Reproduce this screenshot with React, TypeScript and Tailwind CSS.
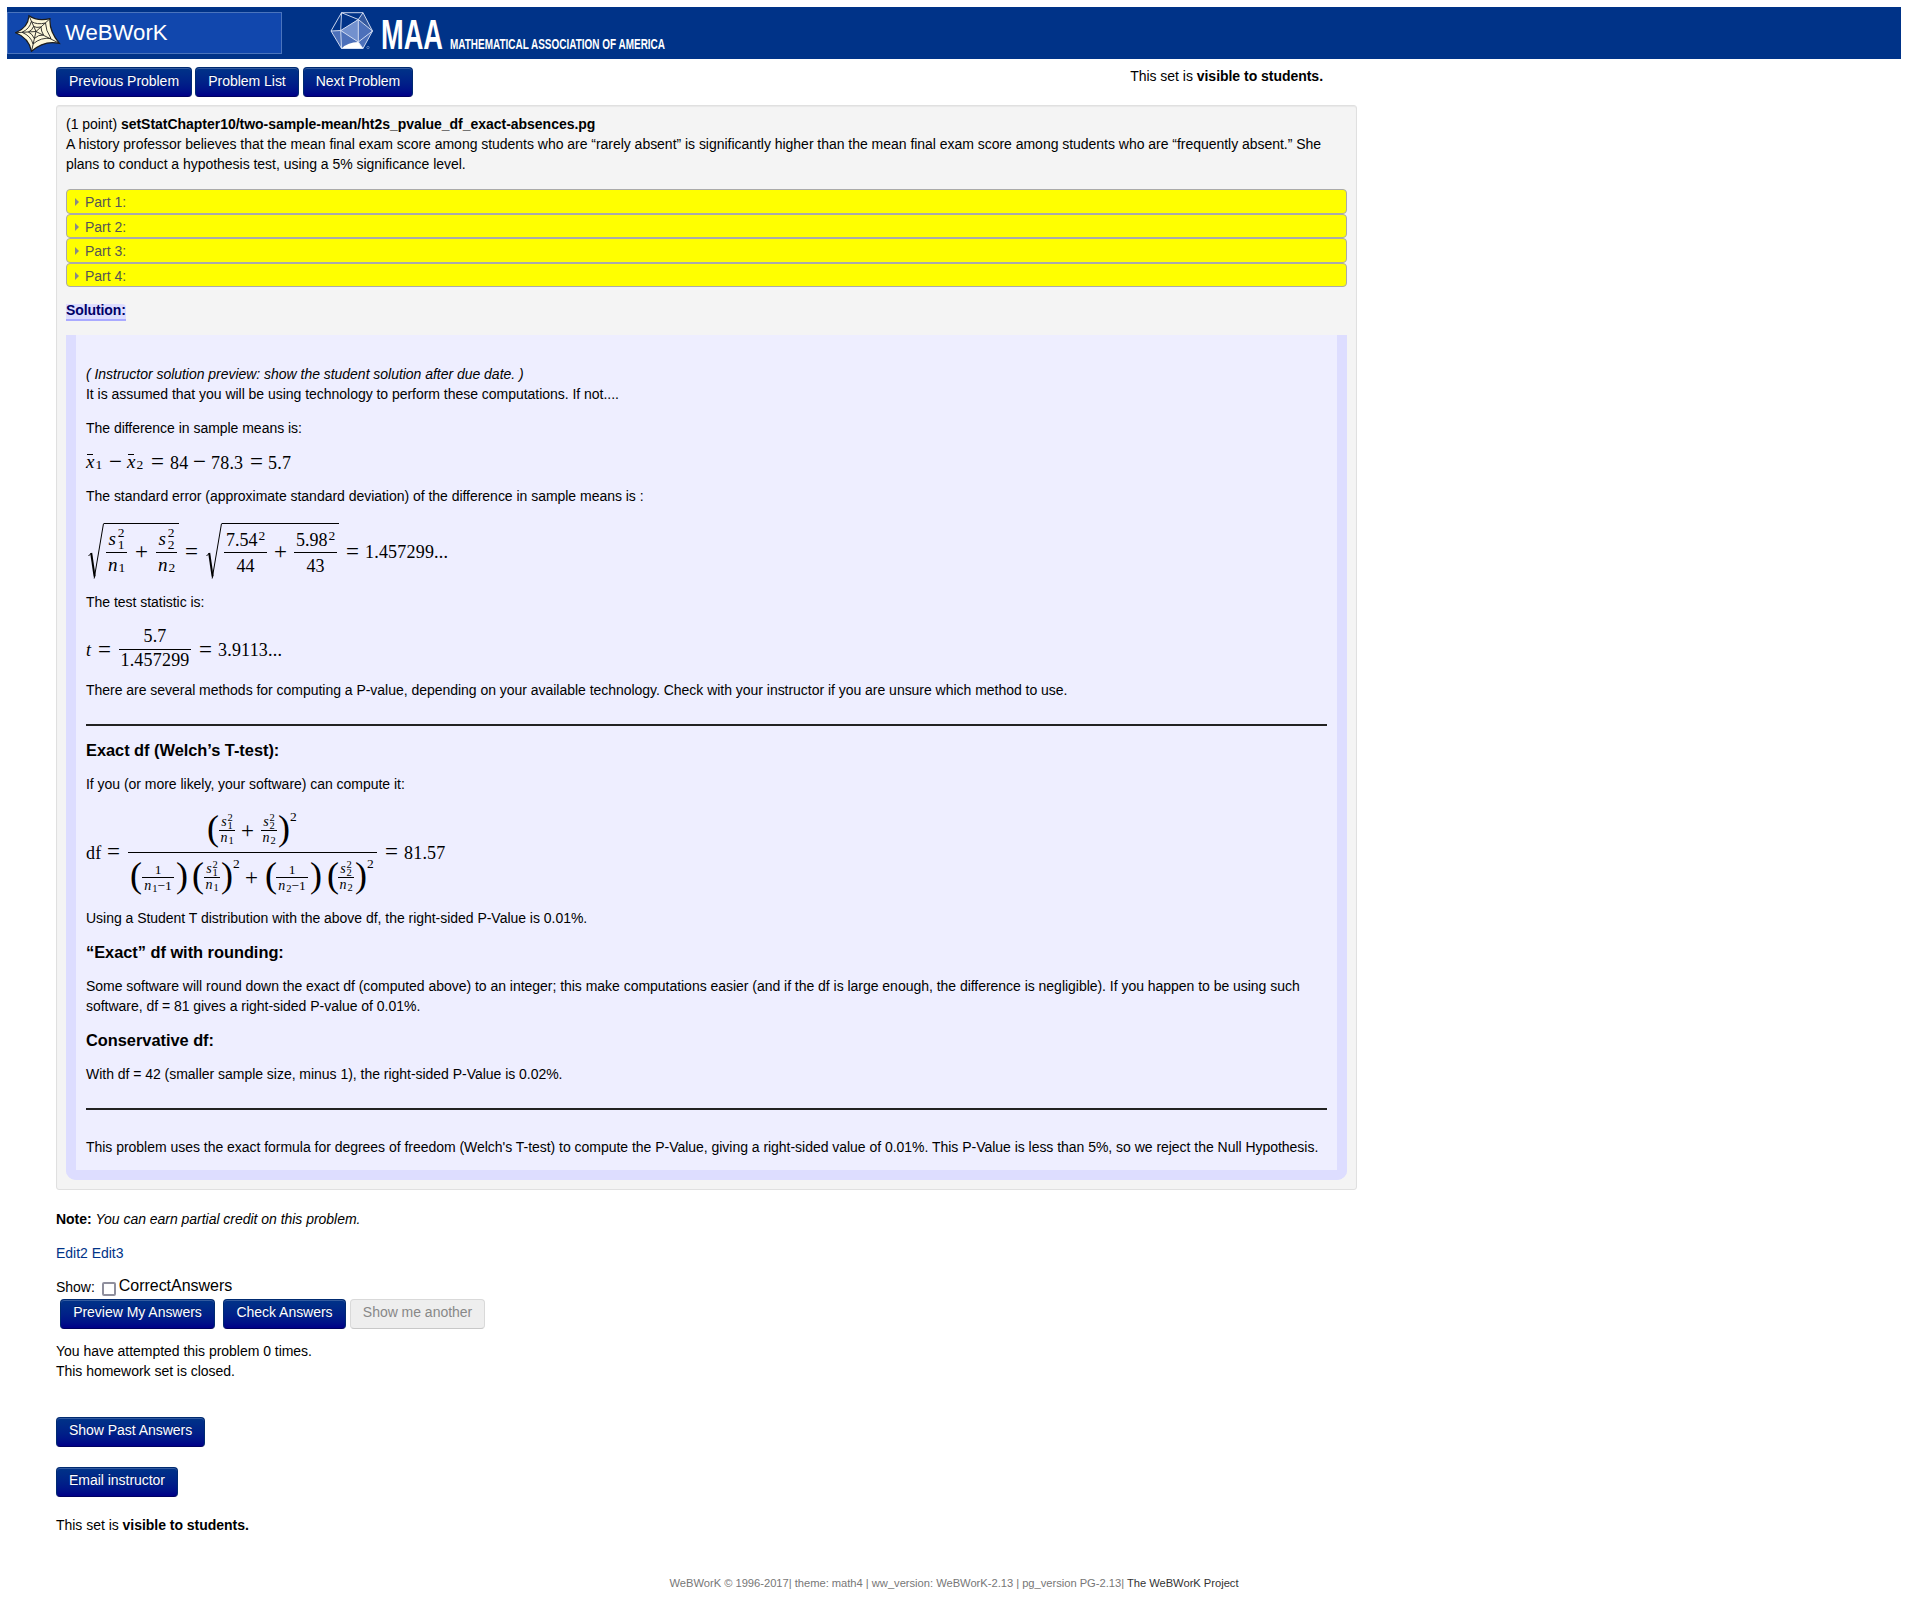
import React from "react";

type Kids = { children?: React.ReactNode; className?: string };

function Btn({ children, className = "pb-[4px]" }: Kids) {
  return (
    <button
      className={`h-[30px] shrink-0 rounded-[4px] border border-[#002a70] border-b-[#000060] bg-linear-to-b from-[#003388] to-[#000088] text-center text-[14px] leading-[20px] text-white shadow-[inset_0_1px_0_rgba(255,255,255,0.2)] [text-shadow:0_-1px_0_rgba(0,0,0,0.25)] ${className}`}
    >
      {children}
    </button>
  );
}

/* ---------- formula pieces ---------- */

function Num({ children, className = "" }: Kids) {
  return <span className={`relative top-px shrink-0 text-[18px] leading-[20px] tracking-[0.2px] whitespace-nowrap ${className}`}>{children}</span>;
}

function Op({ children, className = "" }: Kids) {
  return (
    <span className={`flex w-[13px] shrink-0 items-center justify-center text-[23px] leading-[20px] ${className}`}>
      {children}
    </span>
  );
}

function Sub({ base, sub, small = false }: { base: string; sub: string; small?: boolean }) {
  return small ? (
    <span className="flex items-end">
      <i className="text-[14px] leading-[14px]">{base}</i>
      <span className="relative top-[2px] ml-px text-[10.5px] leading-[12px]">{sub}</span>
    </span>
  ) : (
    <span className="relative top-[2px] flex items-end">
      <i className="text-[19px] leading-[20px]">{base}</i>
      <span className="relative top-[2px] ml-px text-[13.5px] leading-[18px]">{sub}</span>
    </span>
  );
}

function SSquared({ sub, small = false }: { sub: string; small?: boolean }) {
  return small ? (
    <span className="flex items-center">
      <i className="text-[14px] leading-[14px]">s</i>
      <span className="ml-px flex flex-col text-[10.5px] leading-[8px]">
        <span>2</span>
        <span>{sub}</span>
      </span>
    </span>
  ) : (
    <span className="relative -top-px flex items-center">
      <i className="text-[19px] leading-[20px]">s</i>
      <span className="ml-[2px] flex flex-col text-[13.5px] leading-[12px]">
        <span>2</span>
        <span>{sub}</span>
      </span>
    </span>
  );
}

function Frac({ top, bottom, className = "", half = "h-[26px]" }: { top: React.ReactNode; bottom: React.ReactNode; className?: string; half?: string }) {
  return (
    <span className={`flex shrink-0 flex-col items-stretch ${className}`}>
      <span className={`flex items-end justify-center ${half}`}>{top}</span>
      <span className="h-px bg-black" />
      <span className={`flex items-start justify-center ${half}`}>{bottom}</span>
    </span>
  );
}

function Root({ children, className = "" }: Kids) {
  return (
    <span className={`flex h-[56px] shrink-0 ${className}`}>
      <svg className="h-[56px] w-[16px] shrink-0" viewBox="0 0 16 56" fill="none" stroke="#000">
        <path d="M0.5 33 L3.5 30" strokeWidth="1" />
        <path d="M3.2 30 L6.6 53.5" strokeWidth="2" />
        <path d="M6.2 55.5 L15.5 0.5" strokeWidth="1" />
      </svg>
      <span className="flex h-[56px] items-center border-t border-black px-[2px] pt-[2px]">{children}</span>
    </span>
  );
}

function Paren({ children, className = "" }: Kids) {
  return <span className={`relative -top-[3px] flex h-[34px] w-[10px] shrink-0 items-center justify-center text-[36px] leading-[34px] ${className}`}>{children}</span>;
}

function Pow() {
  return <span className="mb-[27px] ml-px w-[7px] shrink-0 text-[13.5px] leading-[12px]">2</span>;
}

function XBar({ sub, className = "" }: { sub: string; className?: string }) {
  return (
    <span className={`flex w-[16px] shrink-0 items-end ${className}`}>
      <span className="flex w-[9px] flex-col items-center">
        <span className="h-px w-[6px] bg-black" />
        <i className="-mt-[2px] text-[19px] leading-[18px]">x</i>
      </span>
      <span className="relative top-[2px] ml-[1px] text-[13.5px] leading-[16px]">{sub}</span>
    </span>
  );
}

function OneOver({ sub }: { sub: string }) {
  return (
    <Frac
      className="w-[32px]"
      half="h-[17px]"
      top={<span className="text-[13.5px] leading-[15px]">1</span>}
      bottom={
        <span className="flex text-[13.5px]">
          <Sub small base="n" sub={sub} />
          <span className="leading-[15px]">−1</span>
        </span>
      }
    />
  );
}

function VarOverN({ sub }: { sub: string }) {
  return <Frac className="w-[16px]" half="h-[17px]" top={<SSquared small sub={sub} />} bottom={<Sub small base="n" sub={sub} />} />;
}

function SquareOver({ value, n }: { value: string; n: string }) {
  return (
    <Frac
      className="w-[43px]"
      top={
        <span className="relative -top-[2px] flex items-end">
          <span className="text-[18px] leading-[20px]">{value}</span>
          <span className="mb-[6px] ml-px text-[13.5px] leading-[16px]">2</span>
        </span>
      }
      bottom={<span className="relative top-[3px] text-[18px] leading-[20px]">{n}</span>}
    />
  );
}

function Formula({ children, className = "" }: Kids) {
  return <div className={`flex items-center font-['Liberation_Serif',serif] tracking-normal text-black ${className}`}>{children}</div>;
}

/* ---------- logos ---------- */

function WebLogo() {
  return (
    <svg className="h-[38px] w-[46px]" viewBox="0 0 46 38">
      <path d="M14 1.8 Q22 7.5 35 4.7 Q34 17 44.3 29.3 Q29 26 16.5 37.3 Q14 24 0.7 18.7 Q13 14 14 1.8Z" fill="#fdf8da" stroke="#1c1c1c" strokeWidth="1.2" />
      <g fill="none" stroke="#222" strokeWidth="0.9">
        <path d="M21 17.5 L14 1.8 M21 17.5 L35 4.7 M21 17.5 L44.3 29.3 M21 17.5 L16.5 37.3 M21 17.5 L0.7 18.7" />
        <path d="M16.3 7.5 Q22 11 30.5 9 Q30.5 16 36 24.5 Q26 23 18 30 Q16 22 7 18.3 Q15 14.5 16.3 7.5Z" />
        <path d="M18.5 12.5 Q21.5 14 26 13 Q26 17 28.5 21 Q23.5 20.5 19.3 24.5 Q17.5 20 13.5 18 Q17.5 16 18.5 12.5Z" />
      </g>
    </svg>
  );
}

function MaaLogo() {
  return (
    <svg className="h-[38px] w-[44px] shrink-0" viewBox="0 0 44 38">
      <path d="M1 19 L10.7 18.5 L28.3 7.5 L42.5 19 L33 36.5 L11.5 36.5Z" fill="#4c70ba" />
      <path d="M28.3 7.5 L33 0.7 L42.5 19Z" fill="#34599f" />
      <path d="M10.7 18.5 L28.3 7.5 L28.3 30Z" fill="#7391ce" />
      <path d="M11.5 36.5 Q18 30 28.3 30 L33 36.5Z" fill="#fff" />
      <g fill="none" stroke="#dfe7f7" strokeWidth="0.9">
        <path d="M11.5 0.7 L33 0.7 L42.5 19 L33 36.5 L11.5 36.5 L1 19Z" />
        <path d="M11.5 0.7 L28.3 7.5 L33 0.7 M28.3 7.5 L42.5 19 L28.3 30 L28.3 7.5 L10.7 18.5 L28.3 30 L33 36.5 M11.5 0.7 L10.7 18.5 L1 19 M10.7 18.5 L11.5 36.5" />
      </g>
      <circle cx="38" cy="35.5" r="1.2" fill="none" stroke="#8fa6d6" strokeWidth="0.6" />
    </svg>
  );
}

const parts = ["Part 1:", "Part 2:", "Part 3:", "Part 4:"];

export default function App() {
  return (
    <div className="h-[1606px] w-[1908px] overflow-hidden bg-white px-[7px] pt-[7px] font-['Liberation_Sans',Arial,sans-serif] text-[14px] leading-[20px] tracking-[-0.028px] text-black">
      <header className="flex h-[52px] items-start bg-[#003388]">
        <div className="mt-[5px] flex h-[42px] w-[275px] items-center border border-[#4a74bd] bg-[#1147ad] pl-[7px]">
          <WebLogo />
          <span className="ml-[4px] text-[22.2px] leading-[30px] text-white">WeBWorK</span>
        </div>
        <div className="mt-[5px] ml-[48px] flex h-[40px] items-start text-white">
          <MaaLogo />
          <svg className="-mt-[5px] h-[52px] w-[300px]" viewBox="0 0 300 52" fill="#fff" fontFamily="Liberation Sans, Arial, sans-serif" fontWeight="700" letterSpacing="0">
            <text x="7" y="42" fontSize="43" textLength="62" lengthAdjust="spacingAndGlyphs">MAA</text>
            <text x="76" y="42" fontSize="14.5" textLength="215" lengthAdjust="spacingAndGlyphs">MATHEMATICAL ASSOCIATION OF AMERICA</text>
          </svg>
        </div>
      </header>

      <main className="ml-[49px] w-[1301px]">
        <div className="flex h-[46px] items-start pt-[8px]">
          <Btn className="w-[136px] pb-[3px]">Previous Problem</Btn>
          <Btn className="ml-[3px] w-[104px] pb-[3px]">Problem List</Btn>
          <Btn className="ml-[4px] w-[110px] pb-[3px]">Next Problem</Btn>
          <div className="-mt-px ml-auto pr-[34px]">
            This set is <b>visible to students.</b>
          </div>
        </div>

        <section className="h-[1085px] rounded-[3px] border border-[#e0e0e0] bg-[#f4f4f4] px-[9px] pt-[8px] shadow-[inset_0_1px_1px_rgba(0,0,0,0.05)]">
          <div>
            (1 point) <b>setStatChapter10/two-sample-mean/ht2s_pvalue_df_exact-absences.pg</b>
          </div>
          <p>
            A history professor believes that the mean final exam score among students who are “rarely absent” is significantly higher than the mean final exam score among students who are “frequently absent.” She plans to conduct a hypothesis test, using a 5% significance level.
          </p>

          <div className="mt-[15px]">
            {parts.map((p) => (
              <div key={p} className="flex h-[24.5px] items-center rounded-[4px] border border-[#aaaaaa] bg-[#ffff00] pt-[1.6px] pl-[8px] text-[#555555]">
                <span className="h-0 w-0 border-y-[4px] border-l-[4px] border-y-transparent border-l-[#888888]" />
                <span className="ml-[6px]">{p}</span>
              </div>
            ))}
          </div>

          <div className="mt-[17px] flex">
            <b className="h-[17px] rounded-tr-[4px] border-b-2 border-[#aaaaff] bg-[#ddddff] leading-[12px] tracking-[-0.1px] text-[#000066]">Solution:</b>
          </div>

          <div className="mt-[14px] h-[845px] rounded-b-[10px] border-x-[10px] border-b-[10px] border-[#ddddff] bg-[#eeeeff] px-[10px] pt-[29px]">
            <p><i>( Instructor solution preview: show the student solution after due date. )</i></p>
            <p>It is assumed that you will be using technology to perform these computations. If not....</p>
            <p className="mt-[14px]">The difference in sample means is:</p>

            <Formula className="mt-[14px] h-[20px]">
              <XBar sub="1" />
              <Op className="ml-[7px]">−</Op>
              <XBar className="ml-[5px]" sub="2" />
              <Op className="ml-[8px]">=</Op>
              <Num className="ml-[6px] w-[18px]">84</Num>
              <Op className="ml-[5px]">−</Op>
              <Num className="ml-[5px] w-[33px]">78.3</Num>
              <Op className="ml-[6px]">=</Op>
              <Num className="ml-[5px]">5.7</Num>
            </Formula>

            <p className="mt-[14px]">The standard error (approximate standard deviation) of the difference in sample means is :</p>

            <Formula className="mt-[16px] h-[57px]">
              <Root className="ml-[2px]">
                <Frac className="w-[21px]" top={<SSquared sub="1" />} bottom={<Sub base="n" sub="1" />} />
                <Op className="mx-[8px]">+</Op>
                <Frac className="w-[21px]" top={<SSquared sub="2" />} bottom={<Sub base="n" sub="2" />} />
              </Root>
              <Op className="relative top-px ml-[6px]">=</Op>
              <Root className="ml-[8px]">
                <SquareOver value="7.54" n="44" />
                <Op className="mx-[7px]">+</Op>
                <SquareOver value="5.98" n="43" />
              </Root>
              <Op className="relative top-px ml-[7px]">=</Op>
              <Num className="ml-[6px]">1.457299...</Num>
            </Formula>

            <p className="mt-[13px]">The test statistic is:</p>

            <Formula className="mt-[15px] h-[44px]">
              <Num className="w-[6px] italic">t</Num>
              <Op className="relative top-px ml-[6px]">=</Op>
              <Frac
                className="ml-[8px] w-[72px]"
                half="h-[21px]"
                top={<span className="relative -top-[3px] text-[18px] leading-[20px] tracking-[0.2px]">5.7</span>}
                bottom={<span className="text-[18px] leading-[21px] tracking-[0.2px]">1.457299</span>}
              />
              <Op className="relative top-px ml-[8px]">=</Op>
              <Num className="ml-[6px]">3.9113...</Num>
            </Formula>

            <p className="mt-[9px]">There are several methods for computing a P-value, depending on your available technology. Check with your instructor if you are unsure which method to use.</p>
            <div className="mt-[24px] h-[2px] bg-[#222222]" />
            <h3 className="mt-[14px] text-[16.4px] font-bold">Exact df (Welch’s T-test):</h3>
            <p className="mt-[14px]">If you (or more likely, your software) can compute it:</p>

            <Formula className="mt-[14px] h-[88px]">
              <Num className="w-[17px]">df</Num>
              <Op className="ml-[4px]">=</Op>
              <Frac
                className="ml-[8px] w-[249px]"
                half="h-[44px]"
                top={
                  <span className="relative top-px flex h-[44px] items-center">
                    <Paren>(</Paren>
                    <span className="ml-px"><VarOverN sub="1" /></span>
                    <Op className="mr-[7px] ml-[6px]">+</Op>
                    <VarOverN sub="2" />
                    <Paren className="ml-[2px]">)</Paren>
                    <Pow />
                  </span>
                }
                bottom={
                  <span className="flex h-[50px] items-center">
                    <Paren className="mr-px">(</Paren>
                    <OneOver sub="1" />
                    <Paren className="ml-[3px]">)</Paren>
                    <Paren className="mr-px ml-[6px]">(</Paren>
                    <VarOverN sub="1" />
                    <Paren className="ml-[2px]">)</Paren>
                    <Pow />
                    <Op className="mr-[8px] ml-[5px]">+</Op>
                    <Paren>(</Paren>
                    <OneOver sub="2" />
                    <Paren className="ml-[3px]">)</Paren>
                    <Paren className="ml-[7px]">(</Paren>
                    <VarOverN sub="2" />
                    <Paren className="ml-[2px]">)</Paren>
                    <Pow />
                  </span>
                }
              />
              <Op className="ml-[8px]">=</Op>
              <Num className="ml-[6px]">81.57</Num>
            </Formula>

            <p className="mt-[12px]">Using a Student T distribution with the above df, the right-sided P-Value is 0.01%.</p>
            <h3 className="mt-[14px] text-[16.4px] font-bold">“Exact” df with rounding:</h3>
            <p className="mt-[14px]">
              Some software will round down the exact df (computed above) to an integer; this make computations easier (and if the df is large enough, the difference is negligible). If you happen to be using such software, df = 81 gives a right-sided P-value of 0.01%.
            </p>
            <h3 className="mt-[14px] text-[16.4px] font-bold">Conservative df:</h3>
            <p className="mt-[14px]">With df = 42 (smaller sample size, minus 1), the right-sided P-Value is 0.02%.</p>
            <div className="mt-[24px] h-[2px] bg-[#222222]" />
            <p className="mt-[27px]">This problem uses the exact formula for degrees of freedom (Welch's T-test) to compute the P-Value, giving a right-sided value of 0.01%. This P-Value is less than 5%, so we reject the Null Hypothesis.</p>
          </div>
        </section>

        <p className="mt-[19px]"><b>Note:</b> <i>You can earn partial credit on this problem.</i></p>
        <p className="mt-[14px] text-[#003388]">Edit2 Edit3</p>

        <div className="mt-[14px] flex h-[22px] items-start">
          <span>Show:</span>
          <span className="mt-[5px] ml-[7px] h-[14px] w-[14px] rounded-[2px] border-2 border-[#8f8f9d] bg-white" />
          <span className="-mt-px ml-[3px] text-[16px]">CorrectAnswers</span>
        </div>
        <div className="flex pl-[4px]">
          <Btn className="w-[155px] pb-[4px]">Preview My Answers</Btn>
          <Btn className="ml-[8px] w-[123px] pb-[4px]">Check Answers</Btn>
          <button className="ml-[4px] h-[30px] w-[135px] rounded-[4px] border border-[#d9d9d9] border-b-[#c8c8c8] bg-[#eeeeee] pb-[4px] text-[#888888]">Show me another</button>
        </div>

        <p className="mt-[12px]">You have attempted this problem 0 times.</p>
        <p>This homework set is closed.</p>
        <Btn className="mt-[36px] block w-[149px] pb-[4px]">Show Past Answers</Btn>
        <Btn className="mt-[20px] block w-[122px] pb-[4px]">Email instructor</Btn>
        <p className="mt-[18px]">This set is <b>visible to students.</b></p>
      </main>

      <footer className="mt-[38px] text-center text-[11.2px] text-[#777777]">
        WeBWorK © 1996-2017| theme: math4 | ww_version: WeBWorK-2.13 | pg_version PG-2.13| <span className="text-[#333333]">The WeBWorK Project</span>
      </footer>
    </div>
  );
}
